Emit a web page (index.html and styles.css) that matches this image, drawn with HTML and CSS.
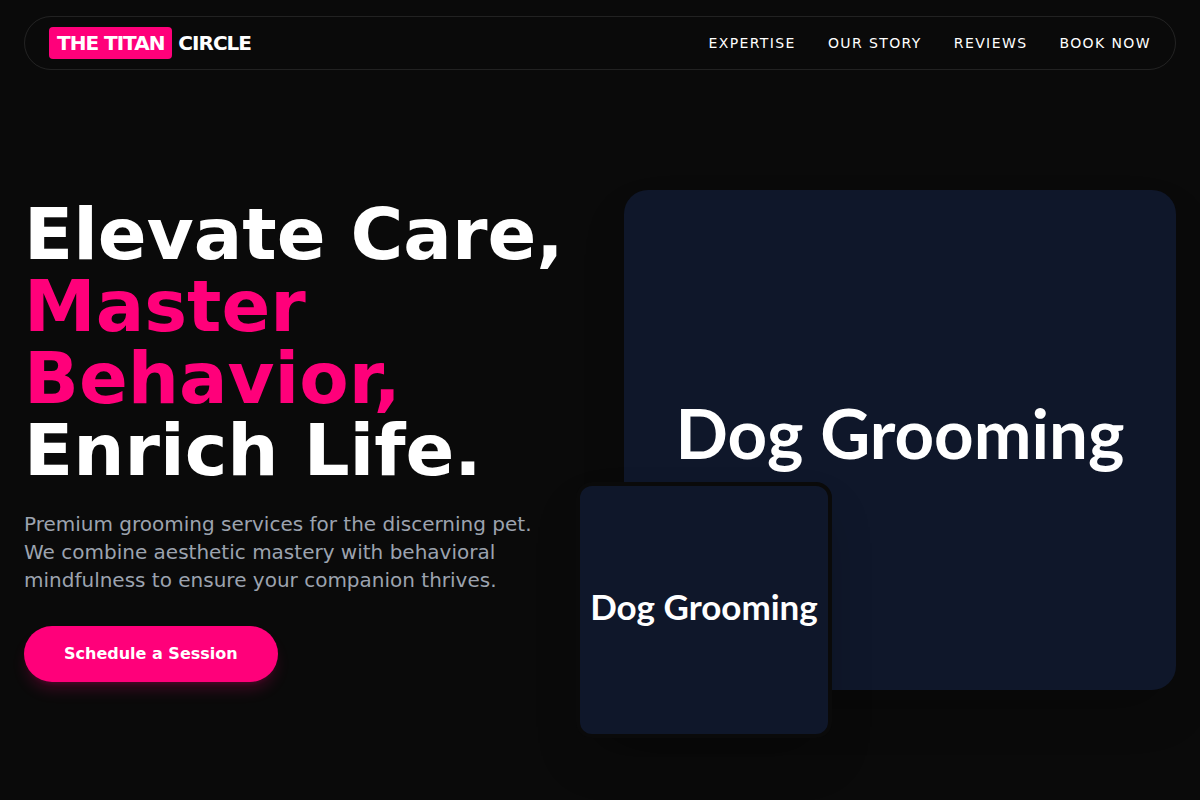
FILE: index.html
```
<!DOCTYPE html>
<html lang="en">
<head>
  <meta charset="UTF-8">
  <meta name="viewport" content="width=device-width, initial-scale=1.0">
  <title>The Titan Circle</title>
  <link rel="stylesheet" href="styles.css">
</head>
<body>

<header class="site-header">
  <nav class="navbar">
    <a href="#home" class="logo"><span class="logo-badge">THE TITAN</span> CIRCLE</a>
    <div class="nav-links">
      <a href="#expertise">Expertise</a>
      <a href="#story">Our Story</a>
      <a href="#reviews">Reviews</a>
      <a href="#book">Book Now</a>
    </div>
  </nav>
</header>

<main class="hero" id="home">
  <div class="hero-text">
    <h1>Elevate Care, <br><span class="accent">Master Behavior,</span> <br>Enrich Life.</h1>
    <p>Premium grooming services for the discerning pet. We combine aesthetic mastery with behavioral mindfulness to ensure your companion thrives.</p>
    <button type="button" class="btn-schedule">Schedule a Session</button>
  </div>

  <div class="hero-media">
    <div class="photo-main">Dog Grooming</div>
    <div class="photo-small">Dog Grooming</div>
  </div>
</main>

</body>
</html>
```
FILE: styles.css
```
* {
  box-sizing: border-box;
}

body {
  margin: 0;
  font-family: "DejaVu Sans", sans-serif;
  background-color: #0a0a0a;
  color: #fff;
}

a {
  color: inherit;
  text-decoration: none;
}

.site-header {
  padding: 16px 24px 0;
  height: 80px;
}

.navbar {
  display: flex;
  justify-content: space-between;
  align-items: center;
  padding: 12px 24px;
  border: 1px solid rgba(255, 255, 255, 0.1);
  border-radius: 999px;
}

.logo {
  font-size: 20px;
  line-height: 28px;
  font-weight: bold;
  letter-spacing: -1px;
}

.logo-badge {
  padding: 4px 8px;
  background-color: #ff007a;
  border-radius: 4px;
}

.nav-links {
  display: flex;
  gap: 32px;
  font-size: 14px;
  line-height: 20px;
  letter-spacing: 0.1em;
  text-transform: uppercase;
}

.nav-links a:hover {
  color: #ff007a;
}

.hero {
  display: grid;
  grid-template-columns: 1fr 1fr;
  gap: 48px;
  align-items: center;
  min-height: calc(100vh - 80px);
  padding: 0 24px;
}

h1 {
  margin: 0 0 24px;
  font-size: 72px;
  line-height: 72px;
  font-weight: bold;
}

.accent {
  color: #ff007a;
}

.hero-text p {
  max-width: 512px;
  margin: 0 0 32px;
  font-size: 20px;
  line-height: 28px;
  color: #9ca3af;
}

.btn-schedule {
  display: block;
  padding: 16px 40px;
  border: none;
  border-radius: 999px;
  background-color: #ff007a;
  color: #fff;
  font-family: inherit;
  font-size: 16px;
  line-height: 24px;
  font-weight: bold;
  cursor: pointer;
  box-shadow: 0 10px 15px -3px rgba(255, 0, 122, 0.2), 0 4px 6px -4px rgba(255, 0, 122, 0.2);
}

.btn-schedule:hover {
  background-color: #d60067;
}

.hero-media {
  position: relative;
}

.photo-main,
.photo-small {
  display: flex;
  justify-content: center;
  align-items: center;
  background-color: #0f172a;
  font-family: Lato, sans-serif;
  font-weight: bold;
  white-space: nowrap;
}

.photo-main {
  height: 500px;
  padding-bottom: 16px;
  border-radius: 24px;
  font-size: 69px;
  box-shadow: 0 25px 50px -12px rgba(0, 0, 0, 0.25);
}

/* overlaps the bottom left corner of the main photo */
.photo-small {
  position: absolute;
  left: -48px;
  bottom: -48px;
  width: 256px;
  height: 256px;
  padding-bottom: 8px;
  border: 4px solid #0a0a0a;
  border-radius: 16px;
  font-size: 35px;
  box-shadow: 0 25px 50px -12px rgba(0, 0, 0, 0.25);
}
```
